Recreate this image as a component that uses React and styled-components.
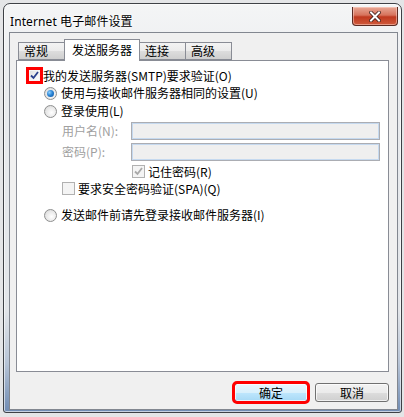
import React from "react";
import styled, { createGlobalStyle } from "styled-components";

const Global = createGlobalStyle`
  html, body { margin: 0; padding: 0; background: #e4e5e7; }
  body { width: 404px; height: 417px; overflow: hidden; font-family: "Noto Sans CJK SC", "Noto Sans", sans-serif; }
`;

const Page = styled.div`
  padding: 3px 3px 0 3px;
`;

const Window = styled.div`
  width: 399px;
  height: 410px;
  box-sizing: border-box;
  border: 1px solid #3e4146;
  border-radius: 7px 7px 3px 3px;
  background: linear-gradient(180deg, #f4f5f6 0%, #e9ebee 20%, #e2e5e9 75%, #b7c4d6 88%, #6f8bb3 100%);
  padding: 0 3px 2px 5px;
  display: flex;
  flex-direction: column;
  box-shadow: inset 0 0 0 1px rgba(255,255,255,0.6);
`;

const TitleBar = styled.div`
  height: 29px;
  display: flex;
  align-items: flex-start;
  justify-content: space-between;
`;

const Title = styled.div`
  font-family: "Noto Sans", "Noto Sans CJK SC", sans-serif;
  font-size: 12px;
  color: #000;
  margin-top: 8px;
  margin-left: 1px;
  letter-spacing: 0.1px;
  text-shadow: 0 0 6px #fff, 0 0 3px #fff;
`;

const CloseBtn = styled.div`
  width: 46px;
  height: 19px;
  margin-top: 3px;
  box-sizing: border-box;
  border: 1px solid #5a2a22;
  border-top: none;
  border-radius: 0 0 4px 4px;
  background: linear-gradient(180deg, #e8a896 0%, #d7735c 45%, #c0391f 55%, #cf5a3c 100%);
  display: flex;
  align-items: center;
  justify-content: center;
  box-shadow: inset 0 0 0 1px rgba(255,220,210,0.5);
`;

const Client = styled.div`
  flex: 1;
  border: 1px solid #828790;
  background: #f0f0f0;
  padding: 6px 8px 7px 6px;
  display: flex;
  flex-direction: column;
`;

const TabRow = styled.div`
  display: flex;
  align-items: flex-end;
  height: 21px;
  padding-left: 2px;
  position: relative;
  z-index: 1;
`;

const Tab = styled.div`
  width: ${(p) => p.$w}px;
  height: ${(p) => (p.$active ? 22 : 18)}px;
  box-sizing: border-box;
  border: 1px solid #898c95;
  border-bottom: ${(p) => (p.$active ? "none" : "1px solid #898c95")};
  margin-left: ${(p) => (p.$first ? 0 : -1)}px;
  margin-bottom: ${(p) => (p.$active ? -1 : 0)}px;
  background: ${(p) =>
    p.$active ? "#fff" : "linear-gradient(180deg, #f3f3f3 0%, #ebebeb 50%, #dddddd 51%, #cfcfcf 100%)"};
  font-size: 12px;
  color: #000;
  display: flex;
  align-items: center;
  padding-left: ${(p) => (p.$active ? 7 : 5)}px;
  padding-bottom: ${(p) => (p.$active ? 2 : 0)}px;
  line-height: 1;
  position: relative;
  z-index: ${(p) => (p.$active ? 2 : 1)};
`;

const Panel = styled.div`
  height: 312px;
  box-sizing: border-box;
  border: 1px solid #898c95;
  background: #fff;
  display: flex;
  flex-direction: column;
  padding-left: 10px;
`;

const Row = styled.div`
  display: flex;
  align-items: center;
  height: ${(p) => p.$h}px;
  margin-top: ${(p) => p.$mt || 0}px;
  padding-left: ${(p) => p.$indent || 0}px;
  font-size: 12px;
  color: ${(p) => (p.$dim ? "#a0a0a0" : "#000")};
  white-space: nowrap;
`;

const Label = styled.span`
  margin-left: ${(p) => p.$ml || 0}px;
  line-height: 1;
`;

const FieldLabel = styled.span`
  width: 69px;
  color: #a0a0a0;
  line-height: 1;
`;

const Input = styled.div`
  width: 249px;
  height: 18px;
  box-sizing: border-box;
  border: 1px solid #abadb3;
  box-shadow: inset 0 0 0 1px #c5d9ef;
  background: #efefef;
`;

const BoxWrap = styled.span`
  display: inline-flex;
  outline: ${(p) => (p.$mark ? "3px solid #ff0000" : "none")};
  outline-offset: -1px;
`;

const Box = styled.span`
  width: 13px;
  height: 13px;
  box-sizing: border-box;
  border: 1px solid ${(p) => (p.$disabled ? "#b1b1b1" : "#8e8f8f")};
  background: ${(p) =>
    p.$disabled ? "#f4f4f4" : "linear-gradient(135deg, #dcdcdc 0%, #f0f0f0 50%, #ffffff 100%)"};
  box-shadow: inset 0 0 0 1px #f4f4f4;
  display: inline-flex;
  align-items: center;
  justify-content: center;
`;

const Radio = styled.span`
  width: 13px;
  height: 13px;
  box-sizing: border-box;
  border-radius: 50%;
  border: 1px solid #8e8f8f;
  background: radial-gradient(circle at 60% 60%, #ffffff 0%, #e6e6e6 60%, #cfcfcf 100%);
  display: inline-flex;
  align-items: center;
  justify-content: center;
`;

const Dot = styled.span`
  width: 7px;
  height: 7px;
  border-radius: 50%;
  background: radial-gradient(circle at 35% 35%, #8fd1ff 0%, #2d86d6 45%, #0a4f9c 100%);
`;

const ButtonRow = styled.div`
  display: flex;
  justify-content: flex-end;
  gap: 7px;
  margin-top: 11px;
`;

const Button = styled.div`
  width: 74px;
  height: 19px;
  box-sizing: border-box;
  border: 1px solid ${(p) => (p.$default ? "#3c7fb1" : "#707070")};
  border-radius: 3px;
  background: ${(p) =>
    p.$default
      ? "linear-gradient(180deg, #eaf6fd 0%, #d9f0fc 50%, #bee6fd 51%, #a7d9f5 100%)"
      : "linear-gradient(180deg, #f2f2f2 0%, #ebebeb 50%, #dddddd 51%, #cfcfcf 100%)"};
  box-shadow: inset 0 0 0 1px rgba(255,255,255,0.7);
  outline: ${(p) => (p.$mark ? "3px solid #ff0000" : "none")};
  outline-offset: -1px;
  font-size: 12px;
  display: flex;
  align-items: center;
  justify-content: center;
  color: #000;
  line-height: 1;
`;

const Check = ({ color = "#2a3f8c" }) => (
  <svg width="9" height="9" viewBox="0 0 9 9">
    <path d="M1 4.5 L3.5 7 L8 1" fill="none" stroke={color} strokeWidth="1.8" />
  </svg>
);

export default function App() {
  return (
    <Page>
      <Global />
      <Window>
        <TitleBar>
          <Title>Internet 电子邮件设置</Title>
          <CloseBtn>
            <svg width="12" height="11" viewBox="0 0 12 11">
              <path d="M2 1.5 L10 9.5 M10 1.5 L2 9.5" stroke="#3a1a14" strokeWidth="3.6" strokeLinecap="square" />
              <path d="M2 1.5 L10 9.5 M10 1.5 L2 9.5" stroke="#ffffff" strokeWidth="2" strokeLinecap="square" />
            </svg>
          </CloseBtn>
        </TitleBar>
        <Client>
          <TabRow>
            <Tab $w={47} $first>常规</Tab>
            <Tab $w={76} $active>发送服务器</Tab>
            <Tab $w={47}>连接</Tab>
            <Tab $w={47}>高级</Tab>
          </TabRow>
          <Panel>
            <Row $h={17} $mt={6} $indent={1}>
              <BoxWrap $mark>
                <Box>
                  <Check />
                </Box>
              </BoxWrap>
              <Label $ml={2}>我的发送服务器(SMTP)要求验证(O)</Label>
            </Row>
            <Row $h={18} $indent={17}>
              <Radio>
                <Dot />
              </Radio>
              <Label $ml={4}>使用与接收邮件服务器相同的设置(U)</Label>
            </Row>
            <Row $h={18} $indent={17}>
              <Radio />
              <Label $ml={4}>登录使用(L)</Label>
            </Row>
            <Row $h={18} $mt={2} $indent={35}>
              <FieldLabel>用户名(N):</FieldLabel>
              <Input />
            </Row>
            <Row $h={18} $mt={3} $indent={35}>
              <FieldLabel>密码(P):</FieldLabel>
              <Input />
            </Row>
            <Row $h={17} $mt={2} $indent={105}>
              <Box $disabled>
                <Check color="#a8a8a8" />
              </Box>
              <Label $ml={3}>记住密码(R)</Label>
            </Row>
            <Row $h={17} $indent={35}>
              <Box $disabled />
              <Label $ml={3}>要求安全密码验证(SPA)(Q)</Label>
            </Row>
            <Row $h={18} $mt={9} $indent={17}>
              <Radio />
              <Label $ml={4}>发送邮件前请先登录接收邮件服务器(I)</Label>
            </Row>
          </Panel>
          <ButtonRow>
            <Button $default $mark>确定</Button>
            <Button>取消</Button>
          </ButtonRow>
        </Client>
      </Window>
    </Page>
  );
}
